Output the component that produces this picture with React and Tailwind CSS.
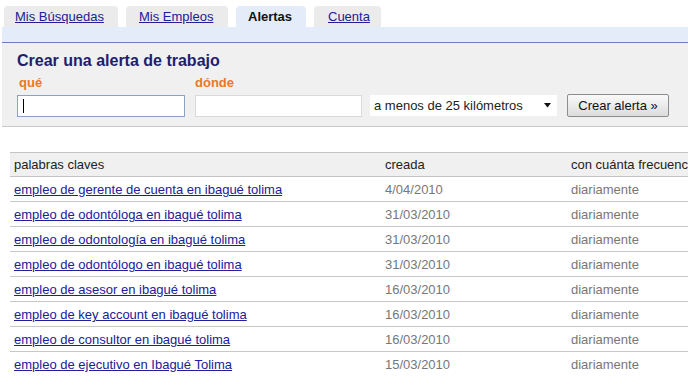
import React from "react";

const rows = [
  ["empleo de gerente de cuenta en ibagué tolima", "4/04/2010"],
  ["empleo de odontóloga en ibagué tolima", "31/03/2010"],
  ["empleo de odontología en ibagué tolima", "31/03/2010"],
  ["empleo de odontólogo en ibagué tolima", "31/03/2010"],
  ["empleo de asesor en ibagué tolima", "16/03/2010"],
  ["empleo de key account en ibagué tolima", "16/03/2010"],
  ["empleo de consultor en ibagué tolima", "16/03/2010"],
  ["empleo de ejecutivo en Ibagué Tolima", "15/03/2010"],
];

export default function App() {
  return (
    <div
      className="w-[688px] h-[386px] overflow-hidden bg-white text-[13px] text-[#222]"
      style={{ fontFamily: '"Liberation Sans", Arial, sans-serif' }}
    >
      {/* tabs */}
      <div className="flex items-end gap-[8px] pl-[4px] pt-[6px]">
        <div className="w-[114px] h-[21px] rounded-t-[4px] bg-[#ebebeb] pl-[11px] leading-[22px]">
          <a className="underline text-[#20209a]">Mis Búsquedas</a>
        </div>
        <div className="w-[102px] h-[21px] rounded-t-[4px] bg-[#ebebeb] pl-[13px] leading-[22px]">
          <a className="underline text-[#20209a]">Mis Empleos</a>
        </div>
        <div className="w-[70px] h-[21px] rounded-t-[4px] bg-[#e5ecf9] pl-[12px] leading-[22px] font-bold text-[#111]">
          Alertas
        </div>
        <div className="w-[67px] h-[21px] rounded-t-[4px] bg-[#ebebeb] pl-[14px] leading-[22px]">
          <a className="underline text-[#20209a]">Cuenta</a>
        </div>
      </div>
      <div className="ml-[2px] h-[16px] bg-[#e5ecf9] border-b border-[#6c80b6]" />

      {/* form */}
      <div className="ml-[2px] h-[84px] bg-[#f0f0f0] border-b border-[#c9c9c9] pl-[15px] pt-[8px]">
        <div className="text-[16px] font-bold leading-[19px] text-[#1e1e6e]">
          Crear una alerta de trabajo
        </div>
        <div className="flex mt-[5px] text-[13px] font-bold leading-[16px] text-[#e8782c]">
          <div className="w-[178px] pl-[2px]">qué</div>
          <div>dónde</div>
        </div>
        <div className="flex items-center mt-[3px]">
          <div className="relative w-[168px] h-[22px] bg-white border border-[#8aa2c4]">
            <span className="absolute left-[5px] top-[3px] w-[1px] h-[14px] bg-black" />
          </div>
          <div className="ml-[10px] w-[167px] h-[22px] bg-white border border-[#dadada]" />
          <div className="ml-[8px] w-[187px] h-[21px] bg-white flex items-center justify-between pl-[4px] pr-[4px] leading-[21px]">
            <span>a menos de 25 kilómetros</span>
            <svg width="9" height="5" viewBox="0 0 9 5" className="mr-[1px]">
              <path d="M1 0 H8 L4.5 4.5 Z" fill="#111" />
            </svg>
          </div>
          <div className="ml-[10px] w-[102px] h-[23px] rounded-[2px] border border-[#8d8d8d] bg-gradient-to-b from-[#fafafa] to-[#dcdcdc] text-center leading-[21px] text-[#111]">
            Crear alerta »
          </div>
        </div>
      </div>

      {/* table */}
      <div className="ml-[10px] mt-[25px]">
        <div className="grid grid-cols-[371px_186px_1fr] h-[25px] bg-[#f0f0f0] border-t border-b border-[#c3c3c3] leading-[24px] text-[#222] whitespace-nowrap">
          <div className="pl-[4px]">palabras claves</div>
          <div className="pl-[4px]">creada</div>
          <div className="pl-[4px]">con cuánta frecuencia</div>
        </div>
        {rows.map(([k, d], i) => (
          <div
            key={i}
            className={
              "grid grid-cols-[371px_186px_1fr] h-[25px] leading-[25px] whitespace-nowrap " +
              (i < rows.length - 1 ? "border-b border-[#c8c8c8]" : "")
            }
          >
            <div className="pl-[4px]">
              <a className="underline text-[#20209a]">{k}</a>
            </div>
            <div className="pl-[4px] text-[#777]">{d}</div>
            <div className="pl-[4px] text-[#777]">diariamente</div>
          </div>
        ))}
      </div>
    </div>
  );
}
